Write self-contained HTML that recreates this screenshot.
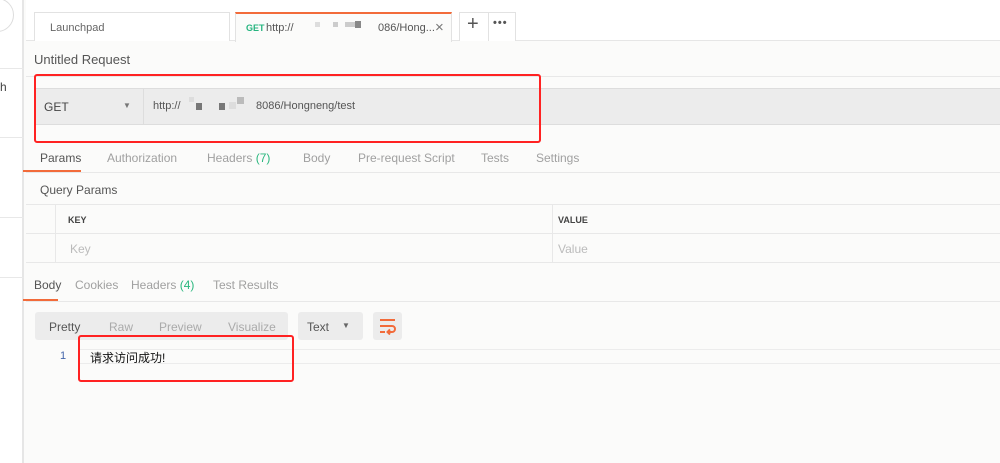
<!DOCTYPE html>
<html><head><meta charset="utf-8"><style>
*{margin:0;padding:0;box-sizing:border-box}
body{width:1000px;height:463px;overflow:hidden;background:#fbfbfa;font-family:"Liberation Sans","Noto Sans CJK SC",sans-serif;font-size:12px;color:#505050;position:relative}
.a{position:absolute}
.sb{left:0;top:0;width:24px;height:463px;background:#fff;border-right:2px solid #e6e6e6}
.hl{position:absolute;height:1px;background:#e8e8e8}
.vl{position:absolute;width:1px;background:#e8e8e8}
.t{position:absolute;white-space:nowrap}
.g{color:#a0a0a0}
.red{position:absolute;border:2px solid #f22;border-radius:3px}
.px{position:absolute;background:#999}
</style></head><body>
<div class="a sb"></div>
<div class="a" style="left:-20px;top:-2px;width:34px;height:34px;border:1px solid #ddd;border-radius:50%;background:#fff"></div>
<div class="hl" style="left:0;top:68px;width:24px"></div>
<div class="hl" style="left:0;top:137px;width:24px"></div>
<div class="hl" style="left:0;top:217px;width:24px"></div>
<div class="hl" style="left:0;top:277px;width:24px"></div>
<div class="t" style="left:0;top:80px;color:#444">h</div>

<div class="a" style="left:26px;top:0;width:974px;height:41px;background:#fff"></div>
<div class="a" style="left:26px;top:40px;width:974px;height:1px;background:#e6e6e6"></div>
<div class="a" style="left:34px;top:12px;width:196px;height:29px;border:1px solid #e2e2e2;border-bottom:none;background:#fff"></div>
<div class="t" style="left:50px;top:22px;font-size:11px;color:#666">Launchpad</div>
<div class="a" style="left:235px;top:12px;width:217px;height:30px;border:1px solid #e2e2e2;border-top:2px solid #f26b3a;border-bottom:none;background:#fbfbfa"></div>
<div class="t" style="left:246px;top:23px;font-size:9px;font-weight:bold;color:#26b47f">GET</div>
<div class="t" style="left:266px;top:22px;font-size:11px;color:#555">http://</div>
<div class="px" style="left:315px;top:22px;width:5px;height:5px;background:#ddd"></div>
<div class="px" style="left:333px;top:22px;width:5px;height:5px;background:#ccc"></div>
<div class="px" style="left:345px;top:22px;width:12px;height:5px;background:#ccc"></div>
<div class="px" style="left:355px;top:21px;width:6px;height:7px;background:#888"></div>
<div class="t" style="left:378px;top:22px;font-size:11px;color:#555">086/Hong...</div>
<div class="t" style="left:435px;top:19px;font-size:15px;color:#777">×</div>
<div class="a" style="left:459px;top:12px;width:30px;height:29px;border:1px solid #e2e2e2;border-bottom:none;background:#fff"></div>
<div class="t" style="left:467px;top:13px;font-size:20px;color:#555">+</div>
<div class="a" style="left:489px;top:12px;width:27px;height:29px;border:1px solid #e2e2e2;border-bottom:none;border-left:none;background:#fff"></div>
<div class="t" style="left:493px;top:17px;font-size:11px;color:#555;font-weight:bold;letter-spacing:1px">•••</div>

<div class="t" style="left:34px;top:52px;font-size:13px;color:#555">Untitled Request</div>
<div class="hl" style="left:26px;top:76px;width:974px"></div>
<div class="a" style="left:35px;top:88px;width:965px;height:37px;background:#ececec;border-top:1px solid #ddd;border-bottom:1px solid #ddd"></div>
<div class="vl" style="left:143px;top:88px;height:37px;background:#ddd"></div>
<div class="t" style="left:44px;top:100px;color:#444">GET</div>
<div class="t" style="left:123px;top:101px;font-size:8px;color:#777">▼</div>
<div class="t" style="left:153px;top:100px;font-size:11px;color:#555">http://</div>
<div class="px" style="left:189px;top:97px;width:5px;height:5px;background:#ddd"></div>
<div class="px" style="left:196px;top:103px;width:6px;height:7px;background:#777"></div>
<div class="px" style="left:219px;top:103px;width:6px;height:7px;background:#777"></div>
<div class="px" style="left:229px;top:102px;width:7px;height:7px;background:#ddd"></div>
<div class="px" style="left:237px;top:97px;width:7px;height:7px;background:#bbb"></div>
<div class="t" style="left:256px;top:100px;font-size:11px;color:#555">8086/Hongneng/test</div>
<div class="red" style="left:34px;top:74px;width:507px;height:69px"></div>

<div class="t" style="left:40px;top:151px;color:#555">Params</div>
<div class="t g" style="left:107px;top:151px">Authorization</div>
<div class="t g" style="left:207px;top:151px">Headers <span style="color:#2ab77e">(7)</span></div>
<div class="t g" style="left:303px;top:151px">Body</div>
<div class="t g" style="left:358px;top:151px">Pre-request Script</div>
<div class="t g" style="left:481px;top:151px">Tests</div>
<div class="t g" style="left:536px;top:151px">Settings</div>
<div class="a" style="left:23px;top:170px;width:58px;height:2px;background:#f26b3a"></div>
<div class="hl" style="left:26px;top:172px;width:974px"></div>

<div class="t" style="left:40px;top:183px;color:#555">Query Params</div>
<div class="hl" style="left:26px;top:204px;width:974px"></div>
<div class="hl" style="left:26px;top:233px;width:974px"></div>
<div class="hl" style="left:26px;top:262px;width:974px"></div>
<div class="vl" style="left:55px;top:204px;height:58px"></div>
<div class="vl" style="left:552px;top:204px;height:58px"></div>
<div class="t" style="left:68px;top:215px;font-size:9px;font-weight:bold;color:#444">KEY</div>
<div class="t" style="left:558px;top:215px;font-size:9px;font-weight:bold;color:#444">VALUE</div>
<div class="t" style="left:70px;top:242px;color:#bbb">Key</div>
<div class="t" style="left:558px;top:242px;color:#bbb">Value</div>

<div class="t" style="left:34px;top:278px;color:#555">Body</div>
<div class="t g" style="left:75px;top:278px">Cookies</div>
<div class="t g" style="left:131px;top:278px">Headers <span style="color:#2ab77e">(4)</span></div>
<div class="t g" style="left:213px;top:278px">Test Results</div>
<div class="a" style="left:23px;top:299px;width:35px;height:2px;background:#f26b3a"></div>
<div class="hl" style="left:26px;top:301px;width:974px"></div>

<div class="a" style="left:35px;top:312px;width:253px;height:28px;background:#ececec;border-radius:3px"></div>
<div class="t" style="left:49px;top:320px;color:#555">Pretty</div>
<div class="t" style="left:109px;top:320px;color:#aaa">Raw</div>
<div class="t" style="left:159px;top:320px;color:#aaa">Preview</div>
<div class="t" style="left:228px;top:320px;color:#aaa">Visualize</div>
<div class="a" style="left:298px;top:312px;width:65px;height:28px;background:#ececec;border-radius:3px"></div>
<div class="t" style="left:307px;top:320px;color:#555">Text</div>
<div class="t" style="left:342px;top:321px;font-size:8px;color:#666">▼</div>
<div class="a" style="left:373px;top:312px;width:29px;height:28px;background:#ececec;border-radius:3px"></div>
<svg class="a" style="left:378px;top:317px" width="19" height="18" viewBox="0 0 19 18"><g stroke="#f26b3a" stroke-width="2" fill="none"><path d="M2 3h15M2 9h12a3 3 0 0 1 0 6h-4M2 15h5"/><path d="M12 12.5l-2.5 2.5 2.5 2.5"/></g></svg>

<div class="hl" style="left:80px;top:349px;width:920px;background:#ececec"></div>
<div class="hl" style="left:80px;top:363px;width:920px;background:#ececec"></div>
<div class="t" style="left:60px;top:350px;font-size:11px;color:#4466aa">1</div>
<div class="t" style="left:90px;top:349px;font-size:12px;color:#111">请求访问成功!</div>
<div class="red" style="left:78px;top:335px;width:216px;height:47px"></div>
</body></html>
